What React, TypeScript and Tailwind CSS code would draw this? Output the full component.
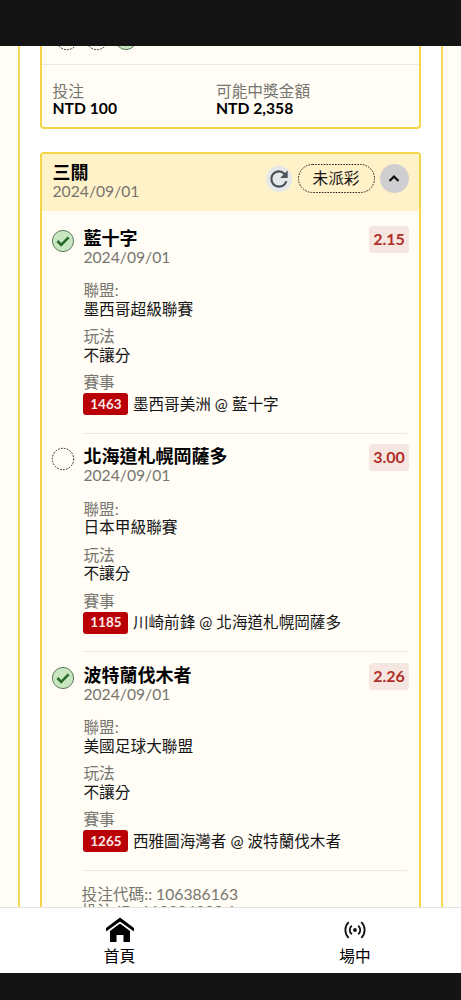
import React from 'react';
import { MdRefresh } from 'react-icons/md';

interface Leg {
  team: string;
  date: string;
  odds: string;
  league: string;
  code: string;
  match: string;
  won: boolean;
}

const legs: Leg[] = [
  { team: '藍十字', date: '2024/09/01', odds: '2.15', league: '墨西哥超級聯賽', code: '1463', match: '墨西哥美洲 @ 藍十字', won: true },
  { team: '北海道札幌岡薩多', date: '2024/09/01', odds: '3.00', league: '日本甲級聯賽', code: '1185', match: '川崎前鋒 @ 北海道札幌岡薩多', won: false },
  { team: '波特蘭伐木者', date: '2024/09/01', odds: '2.26', league: '美國足球大聯盟', code: '1265', match: '西雅圖海灣者 @ 波特蘭伐木者', won: true },
];

const StatusIcon: React.FC<{ won: boolean }> = ({ won }) => (
  <svg width="24" height="24" viewBox="0 0 24 24" fill="none" className="shrink-0">
    {won ? (
      <>
        <circle cx="12" cy="12" r="10.6" fill="#c8e6c0" stroke="#5d7a5a" strokeWidth="1" />
        <path d="M6.4 12l3.8 3.9 7.4-7.5" stroke="#2b6b2b" strokeWidth="2.6" />
      </>
    ) : (
      <circle cx="12" cy="12" r="10.7" stroke="#222" strokeWidth="1" strokeDasharray="1.7 1.3" />
    )}
  </svg>
);

const LegItem: React.FC<{ leg: Leg }> = ({ leg }) => (
  <div className="flex h-[218.5px] pt-[13.5px] pl-[9.4px]">
    <div className="w-[32px] shrink-0">
      <StatusIcon won={leg.won} />
    </div>
    <div className="relative mr-3 flex-1 border-b border-[#ebe9e4]">
      <h3 className="text-[18px] leading-[19px] font-bold text-black">{leg.team}</h3>
      <p className="leading-[18px] text-[#77756f]">{leg.date}</p>
      <div className="mt-[15.5px]">
        <p className="text-[#77756f]">聯盟:</p>
        <p>{leg.league}</p>
      </div>
      <div className="mt-[9px]">
        <p className="text-[#77756f]">玩法</p>
        <p>不讓分</p>
      </div>
      <div className="mt-[9px]">
        <p className="text-[#77756f]">賽事</p>
        <div className="mt-[1.5px] flex h-[22px] items-center">
          <span className="flex h-[22px] w-[45px] items-center justify-center rounded-[3px] bg-[#b90007] text-[13.5px] font-bold text-[#ffeaea]">
            {leg.code}
          </span>
          <span className="ml-[4.5px] text-[15.6px] whitespace-nowrap">{leg.match}</span>
        </div>
      </div>
      <span className="absolute -top-[3px] -right-[2px] flex h-[27px] w-10 items-center justify-center rounded bg-[#f6e6e1] text-[16px] font-bold text-[#b02d28]">
        {leg.odds}
      </span>
    </div>
  </div>
);

const App: React.FC = () => {
  return (
    <div className="flex h-[1000px] w-[461px] flex-col overflow-hidden bg-[#141414] font-['Lato','Noto_Sans_CJK_TC',sans-serif] text-[15.7px] leading-[18.5px] text-[#151515]">
      <div className="h-[45.5px] shrink-0" />

      <main className="flex h-[861.5px] shrink-0 overflow-hidden bg-[#fffdf5]">
        <div className="w-[18px] shrink-0" />
        <div className="h-full w-[425px] border-x-2 border-[#f5d955] bg-white px-5">
          <section className="h-[83.5px] rounded-b border-2 border-t-0 border-[#f5d548] bg-[#fffdf5]">
            <div className="flex h-[19px] items-end overflow-hidden border-b border-[#ebe9e4] pl-[13px]">
              <div className="mb-[13px] flex gap-[5.5px]">
                <StatusIcon won={false} />
                <StatusIcon won={false} />
                <StatusIcon won={true} />
              </div>
            </div>
            <div className="flex pt-[18.5px] pl-[10.5px] leading-[17px]">
              <div className="w-[163.5px]">
                <p className="text-[#77756f]">投注</p>
                <p className="font-bold text-black">NTD 100</p>
              </div>
              <div>
                <p className="text-[#77756f]">可能中獎金額</p>
                <p className="font-bold text-black">NTD 2,358</p>
              </div>
            </div>
          </section>

          <section className="mt-[22.5px] h-[850px] overflow-hidden rounded border-2 border-[#f5d548] bg-[#fffdf5]">
            <header className="flex h-[57.5px] items-center bg-[#fff2c9] pr-[10.5px] pl-[10.5px]">
              <div className="mb-[2px] flex-1">
                <h2 className="text-[18px] leading-[19px] font-bold text-black">三關</h2>
                <p className="leading-[18px] text-[#77756f]">2024/09/01</p>
              </div>
              <button className="mr-px mb-[7.5px] flex size-[26px] items-center justify-center rounded-full bg-[#e5e7e8] text-[#48525b]">
                <MdRefresh className="size-[26px] shrink-0" />
              </button>
              <span className="relative mb-[7.5px] ml-[5px] flex h-[29px] w-[77px] items-center justify-center">
                <svg className="absolute inset-0" width="77" height="29" fill="none">
                  <rect x=".5" y=".5" width="76" height="28" rx="14" stroke="#222" strokeDasharray="1.6 1.2" />
                </svg>
                未派彩
              </span>
              <button className="mb-[7.5px] ml-[5px] flex size-[29px] items-center justify-center rounded-full bg-[#cfcfd2]">
                <svg width="12" height="12" viewBox="0 0 12 12" fill="none">
                  <path d="M1.5 8l4.5-4.5L10.5 8" stroke="#111" strokeWidth="2.2" />
                </svg>
              </button>
            </header>
            <div className="pt-[4px]">
              {legs.map((leg) => (
                <LegItem key={leg.code} leg={leg} />
              ))}
            </div>
            <div className="pt-[15px] pl-[39.5px] leading-[17px] text-[#77756f]">
              <p>投注代碼:: 106386163</p>
              <p>投注 ID: 110386330:1</p>
            </div>
          </section>
        </div>
      </main>

      <nav className="flex h-[66px] shrink-0 border-t border-[#e3e3e3] bg-white text-black">
        <a className="flex w-[239px] shrink-0 flex-col items-center">
          <svg width="28" height="26" viewBox="0 0 28 26" className="mt-[9px]">
            <path d="M14 0.5L28 11V14.5L14 4.5L0 14.5V11Z" />
            <path d="M14 6.5L24 14V25H17.5V18H10.5V25H4V14Z" />
          </svg>
          <span className="mt-[4px]">首頁</span>
        </a>
        <a className="flex w-[232px] shrink-0 flex-col items-center">
          <svg width="22" height="18" viewBox="0 0 22 18" fill="none" stroke="#111" strokeWidth="1.8" className="mt-[13px] mb-[4px]">
            <circle cx="11" cy="9" r="1.9" fill="#111" stroke="none" />
            <path d="M7.8 4.8a5.3 5.3 0 0 0 0 8.4M14.2 4.8a5.3 5.3 0 0 1 0 8.4" />
            <path d="M4.7 1.2a10.8 10.8 0 0 0 0 15.6M17.3 1.2a10.8 10.8 0 0 1 0 15.6" />
          </svg>
          <span className="mt-[4px]">場中</span>
        </a>
      </nav>
    </div>
  );
};

export default App;
